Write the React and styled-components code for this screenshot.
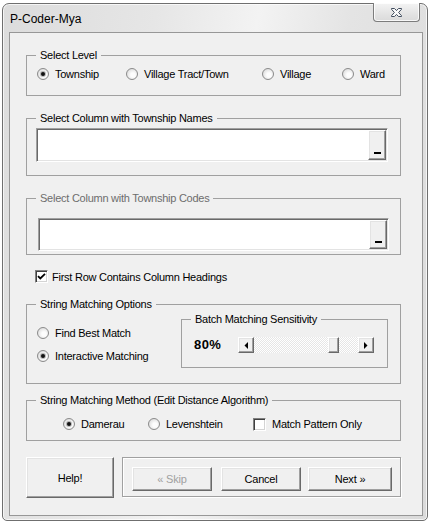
import React from "react";
import styled, { createGlobalStyle, css } from "styled-components";

const GlobalStyle = createGlobalStyle`
  html, body { margin: 0; padding: 0; background: #ffffff; }
  body { font-family: "Liberation Sans", Arial, sans-serif; font-size: 11px; color: #000; }
  * { box-sizing: border-box; }
`;

const raised = css`
  background: #f0f0f0;
  border: 1px solid;
  border-color: #ffffff #696969 #696969 #ffffff;
  box-shadow: inset -1px -1px 0 #a0a0a0, inset 1px 1px 0 #e3e3e3;
`;

const Window = styled.div`
  margin: 3px 0 0 2px;
  width: 426px;
  height: 518px;
  border: 1px solid #6f6f6f;
  border-radius: 7px 7px 5px 5px;
  background: linear-gradient(100deg, #dcdcdc 0%, #e6e6e6 30%, #f3f3f3 50%, #e4e4e4 68%, #dadada 100%);
  box-shadow: inset 0 0 0 1px rgba(255, 255, 255, 0.7);
  display: flex;
  flex-direction: column;
  padding: 0 4px 4px 6px;
`;

const TitleBar = styled.div`
  height: 28px;
  display: flex;
  align-items: flex-start;
  justify-content: space-between;
`;

const Title = styled.div`
  font-family: "Liberation Sans", Arial, sans-serif;
  font-size: 12px;
  line-height: 14px;
  padding: 8px 0 0 1px;
  color: #000;
`;

const CloseButton = styled.div`
  margin: -1px 3px 0 0;
  width: 47px;
  height: 19px;
  border: 1px solid #7c7c7c;
  border-top: none;
  border-radius: 0 0 4px 4px;
  background: linear-gradient(#f4f4f4, #e6e6e6 50%, #dadada);
  box-shadow: inset 0 0 0 1px rgba(255, 255, 255, 0.8);
  display: flex;
  align-items: center;
  justify-content: center;
  padding-top: 1px;
`;

const Client = styled.div`
  width: 414px;
  height: 484px;
  border: 1px solid #979797;
  background: #f0f0f0;
  display: flex;
  flex-direction: column;
  padding-left: 16px;
`;

const GroupBox = styled.fieldset`
  margin: ${(p) => p.$mt || 0}px 0 0 0;
  padding: 0;
  min-width: 0;
  width: ${(p) => p.$w || 375}px;
  height: ${(p) => p.$h}px;
  border: 1px solid #a0a0a0;
  flex: none;
`;

const Legend = styled.legend`
  margin-left: 9px;
  padding: 0 4px;
  font-size: 11px;
  line-height: 13px;
  letter-spacing: -0.25px;
  color: ${(p) => (p.$disabled ? "#6d6d6d" : "#000")};
`;

const Content = styled.div`
  padding: ${(p) => p.$pt || 0}px 0 0 ${(p) => p.$pl || 0}px;
  display: flex;
  align-items: ${(p) => p.$align || "flex-start"};
`;

const Option = styled.label`
  display: flex;
  align-items: center;
  gap: 6px;
  height: 14px;
  width: ${(p) => (p.$w ? `${p.$w}px` : "auto")};
  flex: none;
  font-size: 11px;
  letter-spacing: -0.25px;
  white-space: nowrap;
`;

const RadioCircle = styled.span`
  position: relative;
  width: 12px;
  height: 12px;
  flex: none;
  border-radius: 50%;
  border: 1px solid #8a8a8a;
  background: radial-gradient(circle at 60% 60%, #fdfdfd 25%, #e2e2e2 70%, #cfcfcf 100%);
  ${(p) =>
    p.$checked &&
    css`
      &::after {
        content: "";
        position: absolute;
        left: 3px;
        top: 3px;
        width: 4px;
        height: 4px;
        border-radius: 50%;
        background: #111;
        box-shadow: 0 0 0 1px rgba(60, 60, 60, 0.35);
      }
    `}
`;

const CheckBox = styled.span`
  width: 13px;
  height: 13px;
  flex: none;
  background: #fff;
  border: 1px solid;
  border-color: #808080 #ffffff #ffffff #808080;
  box-shadow: inset 1px 1px 0 #404040, inset -1px -1px 0 #d4d4d4;
  display: flex;
  align-items: center;
  justify-content: center;
`;

const CheckRow = styled.div`
  margin: 15px 0 0 9px;
  height: 13px;
  display: flex;
  align-items: center;
  gap: 4px;
  font-size: 11px;
  letter-spacing: -0.25px;
`;

const RefEdit = styled.div`
  width: ${(p) => p.$w}px;
  height: ${(p) => p.$h}px;
  background: #fff;
  border: 1px solid;
  border-color: #a0a0a0 #ffffff #ffffff #a0a0a0;
  box-shadow: inset 1px 1px 0 #696969, inset -1px -1px 0 #e3e3e3;
  display: flex;
  justify-content: flex-end;
  padding: 1px;
`;

const RefButton = styled.div`
  ${raised};
  width: 18px;
  height: 100%;
  display: flex;
  align-items: flex-end;
  justify-content: center;
  padding-bottom: 5px;
  &::after {
    content: "";
    width: 7px;
    height: 2px;
    background: #000;
  }
`;

const LeftCol = styled.div`
  width: 144px;
  flex: none;
  padding-top: 15px;
  display: flex;
  flex-direction: column;
  gap: 9px;
`;

const Percent = styled.div`
  width: 44px;
  flex: none;
  font-weight: bold;
  font-size: 13px;
  letter-spacing: 0.4px;
  line-height: 16px;
`;

const ScrollBar = styled.div`
  width: 136px;
  height: 16px;
  display: flex;
`;

const ArrowBtn = styled.div`
  ${raised};
  width: 16px;
  height: 16px;
  flex: none;
  display: flex;
  align-items: center;
  justify-content: center;
`;

const Track = styled.div`
  flex: 1;
  height: 16px;
  display: flex;
  background: repeating-conic-gradient(#ffffff 0 25%, #e6e6e6 0 50%) 0 0 / 2px 2px;
`;

const Thumb = styled.div`
  ${raised};
  width: 11px;
  height: 16px;
  flex: none;
`;

const BottomRow = styled.div`
  margin-top: 16px;
  display: flex;
  align-items: flex-start;
  gap: 8px;
`;

const CmdButton = styled.div`
  ${raised};
  width: ${(p) => p.$w}px;
  height: ${(p) => p.$h}px;
  flex: none;
  display: flex;
  align-items: center;
  justify-content: center;
  font-size: 11px;
  letter-spacing: -0.2px;
  color: ${(p) => (p.$disabled ? "#a0a0a0" : "#000")};
`;

const ButtonFrame = styled.div`
  width: 279px;
  height: 40px;
  border: 1px solid #a0a0a0;
  box-shadow: inset 1px 1px 0 #ffffff, 1px 1px 0 #ffffff;
  display: flex;
  padding: 9px 0 0 9px;
`;

const ButtonGap = styled.div`
  width: ${(p) => p.$w}px;
  flex: none;
`;

function CloseGlyph() {
  return (
    <svg width="13" height="11" viewBox="0 0 13 11">
      <path
        d="M1.5 1.5H4.5L6.5 3.6L8.5 1.5H11.5V2.3L8.6 5.5L11.5 8.7V9.5H8.5L6.5 7.4L4.5 9.5H1.5V8.7L4.4 5.5L1.5 2.3Z"
        fill="#fbfbfb"
        stroke="#414d5e"
        strokeWidth="1"
        strokeLinejoin="round"
      />
    </svg>
  );
}

function CheckMark() {
  return (
    <svg width="9" height="9" viewBox="0 0 9 9">
      <path d="M1 4.2L3.3 6.5L8 1.8" fill="none" stroke="#000" strokeWidth="1.8" />
    </svg>
  );
}

function Triangle({ dir }) {
  return (
    <svg width="4" height="7" viewBox="0 0 4 7">
      {dir === "left" ? <path d="M4 0V7L0.5 3.5Z" fill="#000" /> : <path d="M0 0V7L3.5 3.5Z" fill="#000" />}
    </svg>
  );
}

function Radio({ checked, label, w }) {
  return (
    <Option $w={w}>
      <RadioCircle $checked={checked} />
      <span>{label}</span>
    </Option>
  );
}

function Check({ checked, label }) {
  return (
    <Option>
      <CheckBox>{checked && <CheckMark />}</CheckBox>
      <span>{label}</span>
    </Option>
  );
}

function Slider({ value }) {
  const trackWidth = 136 - 32;
  const offset = Math.round(((trackWidth - 11) * value) / 100);
  return (
    <ScrollBar>
      <ArrowBtn>
        <Triangle dir="left" />
      </ArrowBtn>
      <Track>
        <Thumb style={{ marginLeft: offset }} />
      </Track>
      <ArrowBtn>
        <Triangle dir="right" />
      </ArrowBtn>
    </ScrollBar>
  );
}

export default function App() {
  return (
    <>
      <GlobalStyle />
      <Window>
        <TitleBar>
          <Title>P-Coder-Mya</Title>
          <CloseButton>
            <CloseGlyph />
          </CloseButton>
        </TitleBar>
        <Client>
          <GroupBox $mt={16} $h={47}>
            <Legend>Select Level</Legend>
            <Content $pt={5} $pl={10}>
              <Radio checked label="Township" w={89} />
              <Radio label="Village Tract/Town" w={136} />
              <Radio label="Village" w={80} />
              <Radio label="Ward" />
            </Content>
          </GroupBox>

          <GroupBox $mt={16} $h={64}>
            <Legend>Select Column with Township Names</Legend>
            <Content $pt={3} $pl={9}>
              <RefEdit $w={352} $h={34}>
                <RefButton />
              </RefEdit>
            </Content>
          </GroupBox>

          <GroupBox $mt={16} $h={63}>
            <Legend $disabled>Select Column with Township Codes</Legend>
            <Content $pt={13} $pl={11}>
              <RefEdit $w={351} $h={33}>
                <RefButton />
              </RefEdit>
            </Content>
          </GroupBox>

          <CheckRow>
            <CheckBox>
              <CheckMark />
            </CheckBox>
            <span>First Row Contains Column Headings</span>
          </CheckRow>

          <GroupBox $mt={15} $h={86}>
            <Legend>String Matching Options</Legend>
            <Content $pl={10}>
              <LeftCol>
                <Radio label="Find Best Match" />
                <Radio checked label="Interactive Matching" />
              </LeftCol>
              <GroupBox $mt={2} $h={55} $w={207}>
                <Legend>Batch Matching Sensitivity</Legend>
                <Content $pt={11} $pl={12} $align="center">
                  <Percent>80%</Percent>
                  <Slider value={80} />
                </Content>
              </GroupBox>
            </Content>
          </GroupBox>

          <GroupBox $mt={10} $h={47}>
            <Legend>String Matching Method (Edit Distance Algorithm)</Legend>
            <Content $pt={10} $pl={36}>
              <Radio checked label="Damerau" w={85} />
              <Radio label="Levenshtein" w={105} />
              <Check label="Match Pattern Only" />
            </Content>
          </GroupBox>

          <BottomRow>
            <CmdButton $w={88} $h={41}>
              Help!
            </CmdButton>
            <ButtonFrame>
              <CmdButton $w={80} $h={24} $disabled>
                « Skip
              </CmdButton>
              <ButtonGap $w={9} />
              <CmdButton $w={80} $h={24}>
                Cancel
              </CmdButton>
              <ButtonGap $w={7} />
              <CmdButton $w={84} $h={24}>
                Next »
              </CmdButton>
            </ButtonFrame>
          </BottomRow>
        </Client>
      </Window>
    </>
  );
}
